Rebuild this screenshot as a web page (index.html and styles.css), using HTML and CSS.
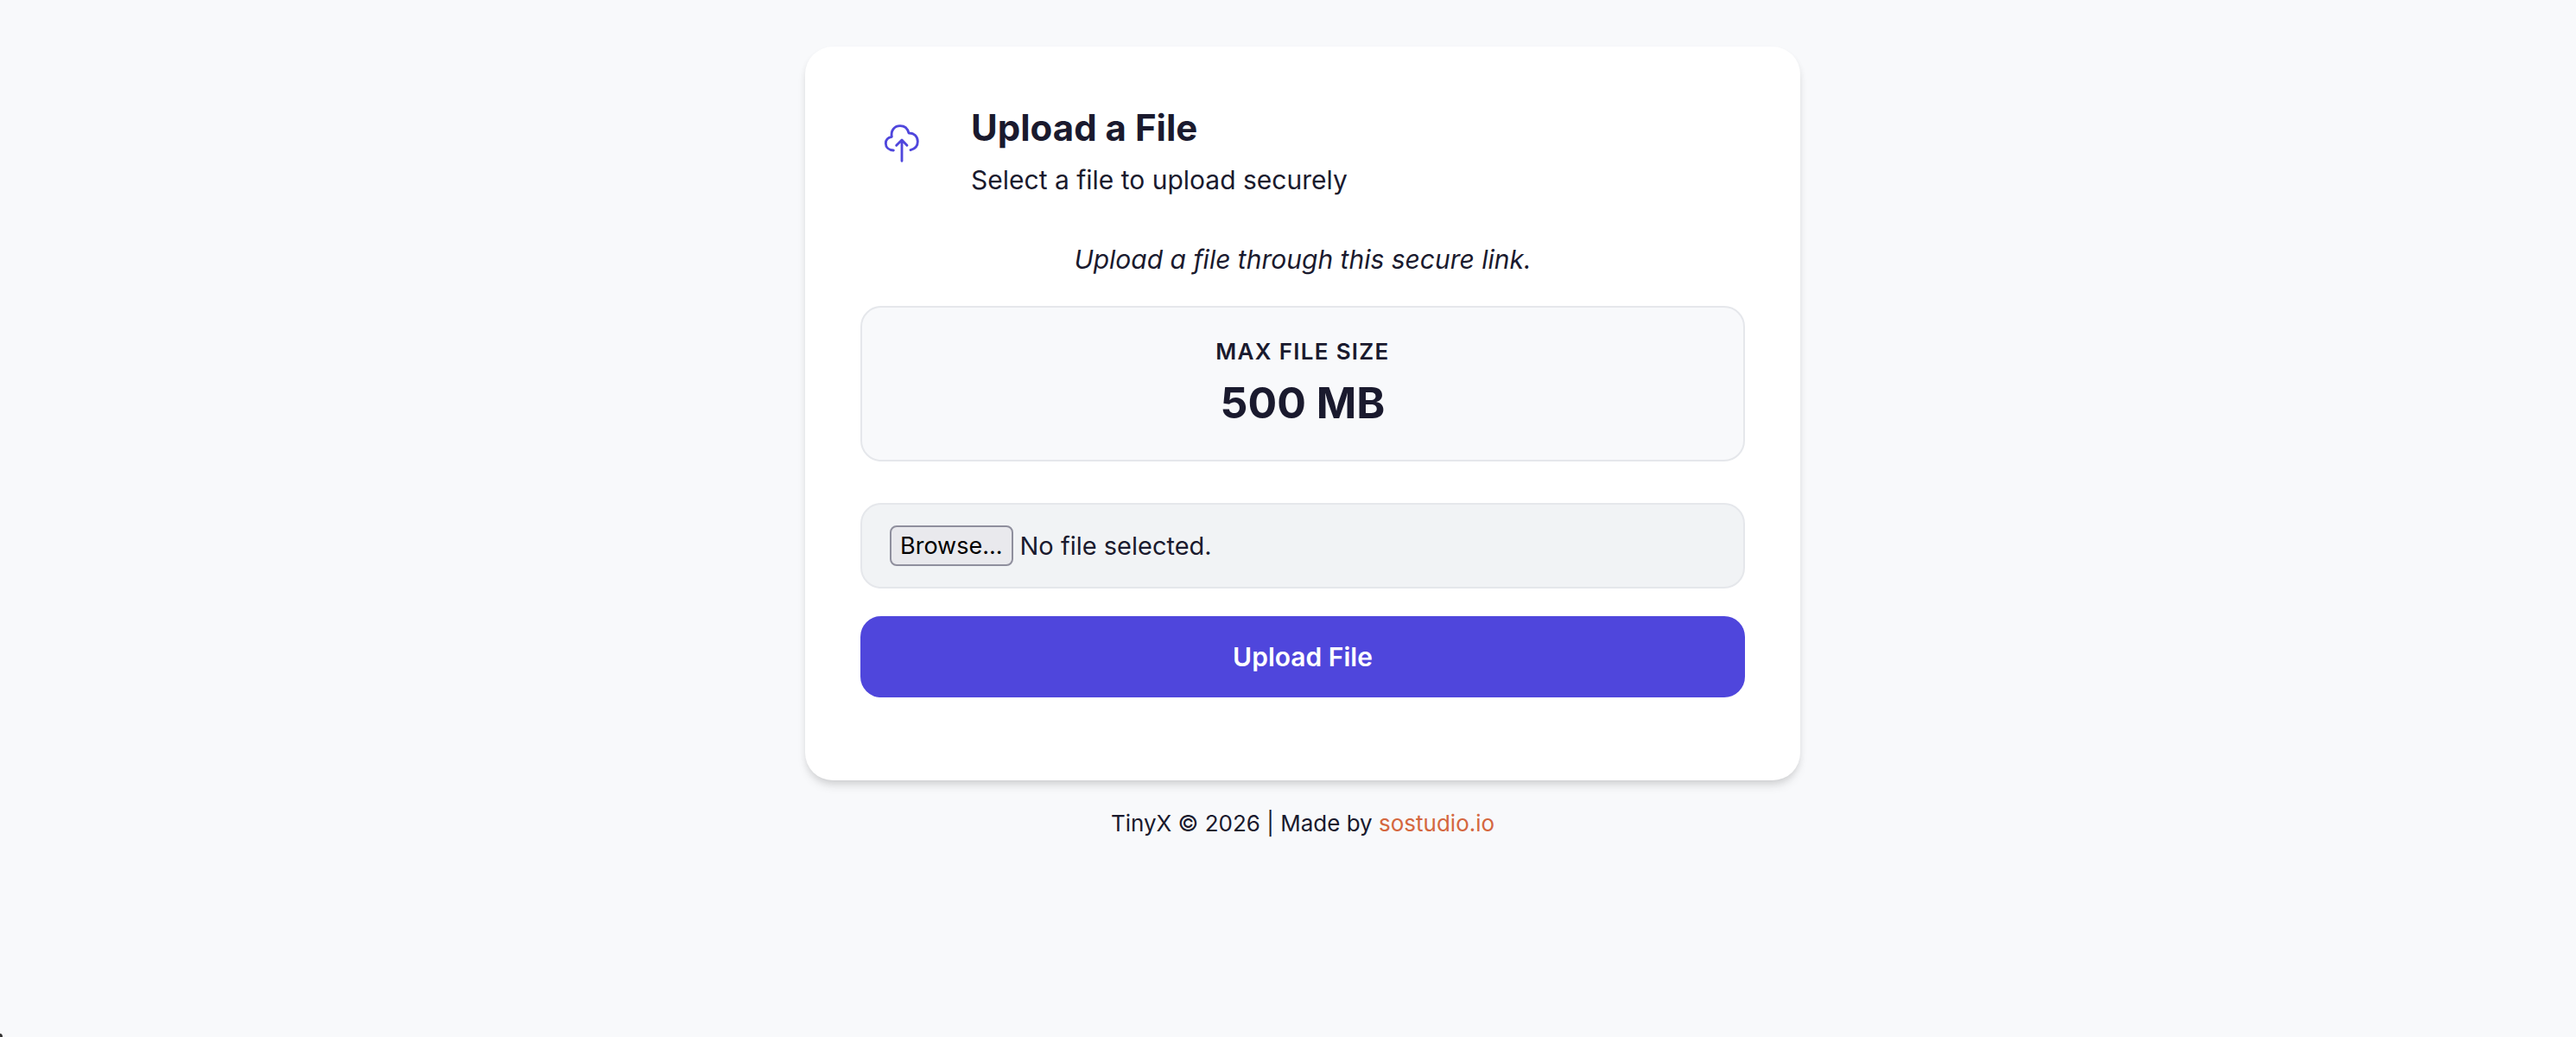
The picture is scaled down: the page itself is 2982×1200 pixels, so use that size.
FILE: index.html
```html
<!DOCTYPE html>
<html lang="en">
<head>
  <meta charset="UTF-8" />
  <meta name="viewport" content="width=device-width, initial-scale=1.0" />
  <title>Upload a File</title>
  <link rel="stylesheet" href="styles.css">
</head>
<body>
  <main class="card">
    <header class="card-header">
      <div class="icon-box">
        <svg class="icon" viewBox="60 66 144 144" fill="none" stroke="currentColor" stroke-width="8.5" stroke-linecap="round" stroke-linejoin="round" aria-hidden="true">
          <path d="M103 162C86 161 76 151 76 138C76 126 84 117 97 115C93 94 105 77 126 77C141 77 152 86 156 102C174 101 187 114 187 131C187 146 177 157 162 161" />
          <path d="M132 199V127M113 145L132 126L150 145" />
        </svg>
      </div>
      <div>
        <h1 class="title">Upload a File</h1>
        <p class="subtitle">Select a file to upload securely</p>
      </div>
    </header>

    <p class="message">Upload a file through this secure link.</p>

    <div class="limit">
      <div class="limit-label">Max file size</div>
      <div class="limit-value">500 MB</div>
    </div>

    <form class="upload-form">
      <label class="file-field" for="file">
        <input class="file-input" type="file" id="file" name="file">
        <span class="browse">Browse...</span>
        <span id="fileName">No file selected.</span>
      </label>
      <button class="upload-button" type="submit">Upload File</button>
    </form>
  </main>

  <footer class="footer">TinyX © 2026 | Made by <a href="#">sostudio.io</a></footer>
  <div class="corner"></div>

  <script>
    const fileInput = document.getElementById("file");
    const fileName = document.getElementById("fileName");

    fileInput.addEventListener("change", () => {
      fileName.textContent = fileInput.files.length ? fileInput.files[0].name : "No file selected.";
    });
  </script>
</body>
</html>
```
FILE: styles.css
```css
* {
  box-sizing: border-box;
}

body {
  margin: 0;
  min-height: 100vh;
  padding: 54px 0 32px 34px;
  display: flex;
  flex-direction: column;
  align-items: center;
  background: #f8f9fb;
  color: #1a1a2e;
  font-family: Inter, sans-serif;
  font-size: 30px;
  line-height: 48px;
}

h1,
p {
  margin: 0;
}

.card {
  width: 100%;
  max-width: 1152px;
  padding: 64px 64px 96px;
  background: #fff;
  border-radius: 32px;
  box-shadow: 0 8px 12px -2px rgba(0, 0, 0, 0.1), 0 4px 8px -2px rgba(0, 0, 0, 0.1);
}

.card-header {
  display: flex;
  gap: 32px;
  margin-bottom: 44px;
}

.icon-box {
  flex: none;
  width: 96px;
  height: 96px;
  display: flex;
  align-items: center;
  justify-content: center;
  color: #4f46dc;
}

.icon {
  width: 48px;
  height: 48px;
}

.title {
  margin-bottom: 6px;
  font-size: 42px;
  line-height: 60px;
  font-weight: 700;
}

.message {
  margin-bottom: 30px;
  text-align: center;
  font-style: italic;
}

.limit {
  margin-bottom: 48px;
  padding: 32px 32px 26px;
  text-align: center;
  background: #f8f9fb;
  border: 2px solid #e5e7eb;
  border-radius: 24px;
}

.limit-label {
  font-size: 26px;
  line-height: 38px;
  font-weight: 600;
  letter-spacing: 0.05em;
  text-transform: uppercase;
}

.limit-value {
  font-size: 50px;
  line-height: 80px;
  font-weight: 700;
}

.upload-form {
  display: flex;
  flex-direction: column;
  gap: 32px;
}

.file-field {
  position: relative;
  display: flex;
  align-items: center;
  gap: 8px;
  padding: 24px 32px;
  background: #f1f3f5;
  border: 2px solid #e5e7eb;
  border-radius: 24px;
  font-size: 29px;
  line-height: 47px;
  cursor: pointer;
}

/* the native control covers the field, the spans draw it */
.file-input {
  position: absolute;
  inset: 0;
  width: 100%;
  height: 100%;
  opacity: 0;
  cursor: pointer;
}

.browse {
  padding: 0 10px;
  color: #000;
  background: #e9e9ed;
  border: 2px solid #8f8f9d;
  border-radius: 8px;
  font-size: 27px;
  line-height: 43px;
}

.upload-button {
  padding: 23px 32px;
  border: 0;
  border-radius: 24px;
  background: #4f46dc;
  color: #fff;
  font: inherit;
  font-weight: 600;
  cursor: pointer;
}

.upload-button:hover {
  background: #4338ca;
}

.footer {
  margin-top: 29px;
  font-size: 26px;
  line-height: 42px;
}

.footer a {
  color: #d4673f;
  text-decoration: none;
}

.corner {
  position: fixed;
  left: 0;
  bottom: 0;
  width: 3px;
  height: 4px;
  background: #333;
  border-top-right-radius: 3px 4px;
}
```
